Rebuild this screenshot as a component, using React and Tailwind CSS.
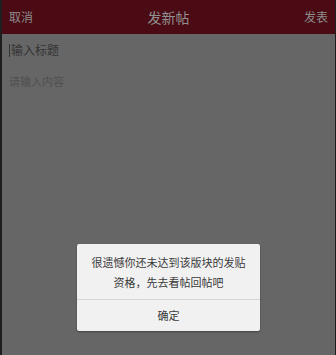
export default function App() {
  return (
    <div
      className="w-[336px] h-[355px] flex bg-[#1e1e1e] overflow-hidden"
      style={{ fontFamily: '"Noto Sans CJK SC", "Liberation Sans", sans-serif' }}
    >
      <div className="w-[2px] shrink-0" />
      <div className="relative flex-1 flex flex-col bg-[#666666]">
        {/* header */}
        <div className="h-[34px] shrink-0 bg-[#4b0b14] flex items-center justify-between px-[7px]">
          <span className="text-[12px] text-[#8c8c8c] w-[40px]">取消</span>
          <span className="text-[14px] text-[#909090]">发新帖</span>
          <span className="text-[12px] text-[#8c8c8c] w-[40px] text-right">发表</span>
        </div>

        {/* title input */}
        <div className="h-[32px] flex items-center px-[7px]">
          <span className="w-px h-[13px] bg-[#333] mr-px" />
          <span className="text-[12px] text-[#333333]">输入标题</span>
        </div>

        {/* content input */}
        <div className="px-[7px] pt-[1px]">
          <span className="text-[11px] text-[#505050]">请输入内容</span>
        </div>

        {/* dialog */}
        <div className="absolute left-[75px] top-[244px] w-[183px] rounded-[2px] bg-[#f1f1f1] shadow-[0_1px_2px_rgba(0,0,0,0.35)]">
          <div className="pt-[8px] pb-[7px] text-center text-[11px] leading-[20px] text-[#3a3a3a]">
            <div>很遗憾你还未达到该版块的发贴</div>
            <div>资格，先去看帖回帖吧</div>
          </div>
          <div className="h-px bg-[#d6d6d6]" />
          <div className="h-[31px] flex items-center justify-center text-[11px] text-[#3a3a3a]">
            确定
          </div>
        </div>
      </div>
      <div className="w-px shrink-0" />
    </div>
  );
}
